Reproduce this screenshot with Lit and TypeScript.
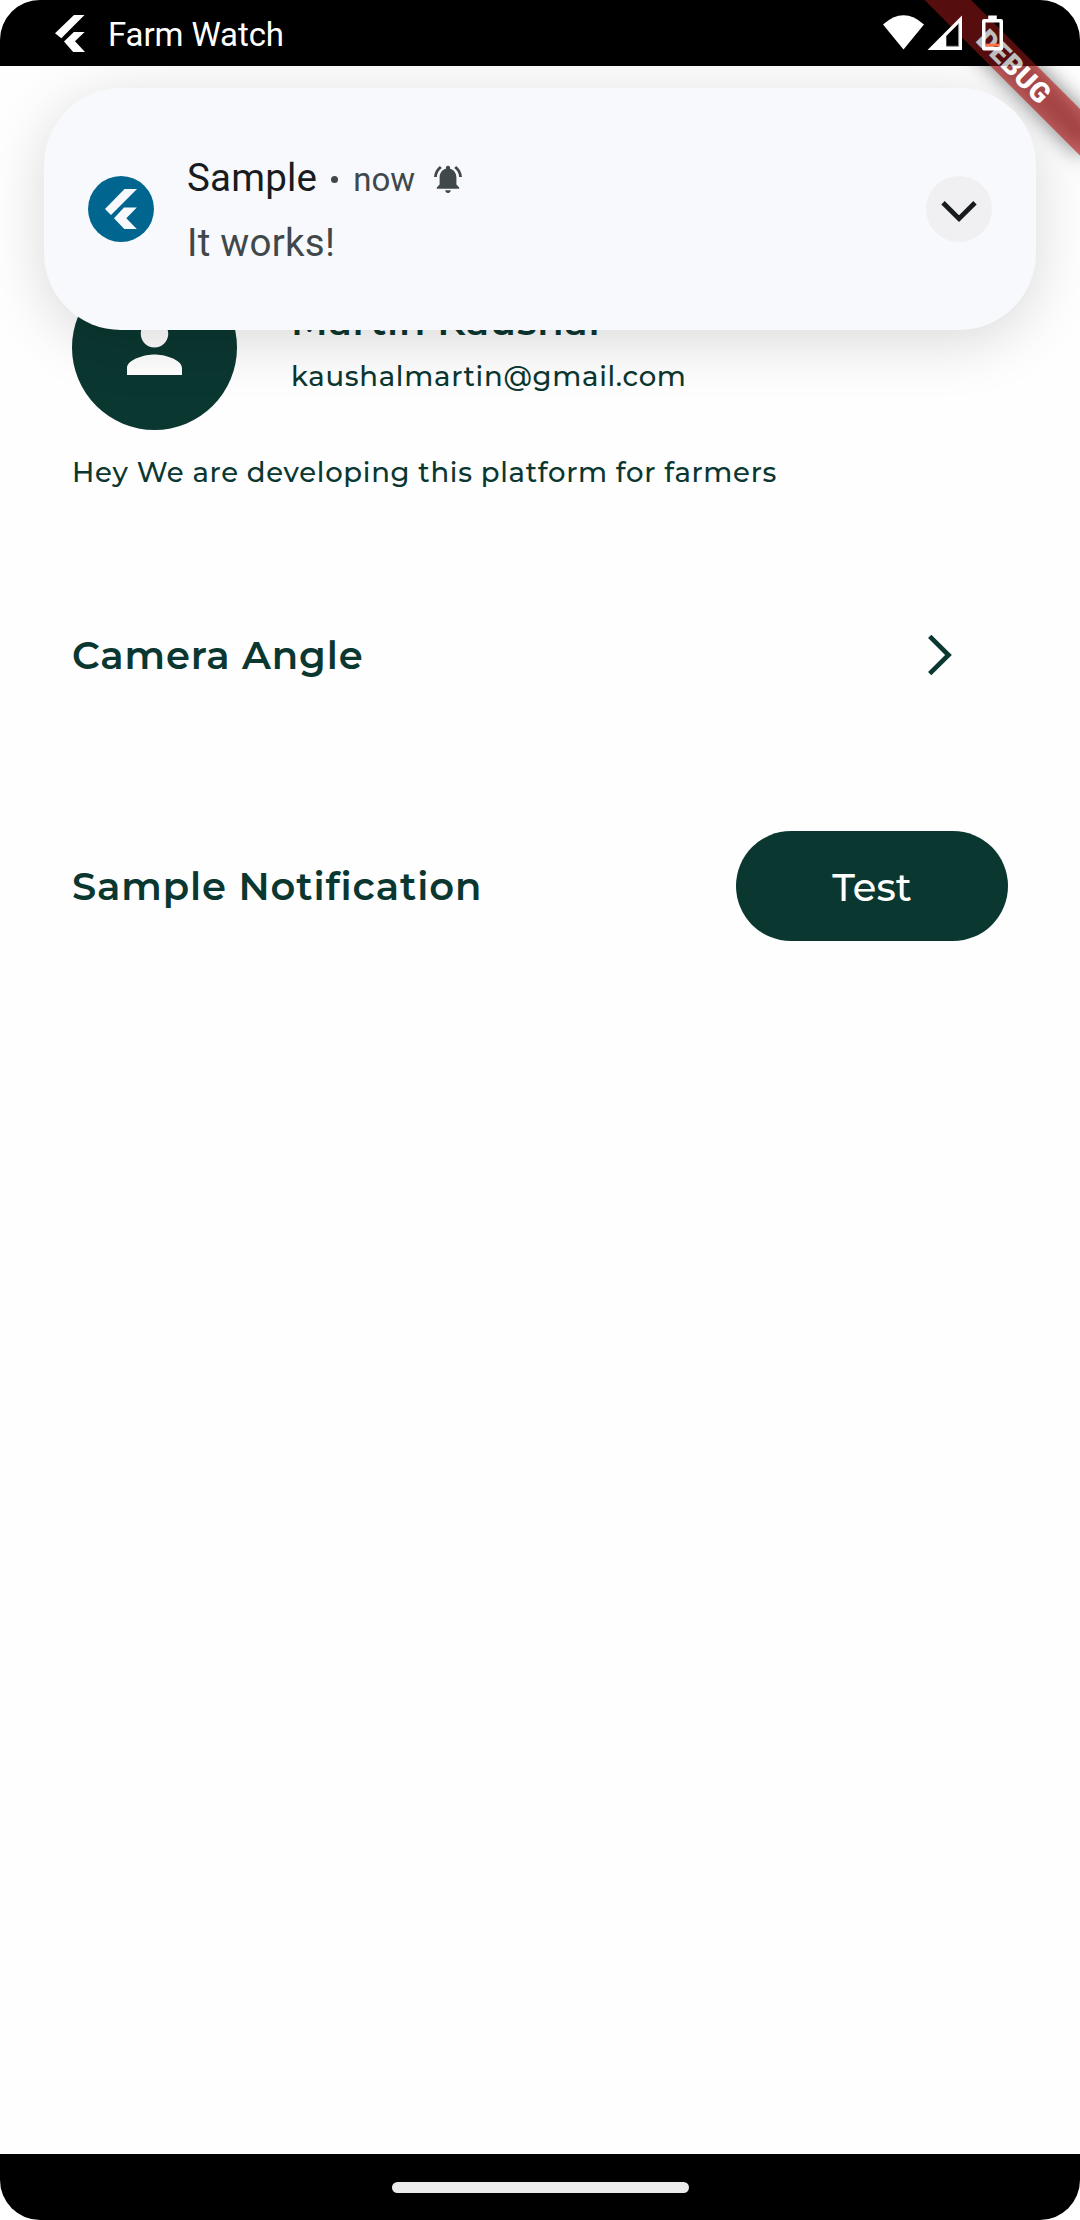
import { LitElement, html, css, svg } from "lit";
import { customElement } from "lit/decorators.js";

const flutterMark = svg`
  <path d="M19 0H29.5L6.3 23.3L0 18.3Z M18.8 17H29.6L20 26.3L30 37H18.2L9 26.5Z" fill="#fff"/>`;

@customElement("status-bar")
class StatusBar extends LitElement {
  static styles = css`
    :host { display: block; }
    .bar { box-sizing: border-box; height: 66px; display: flex; align-items: center; padding: 0 76px 0 55px; background: rgba(0, 0, 0, 0.25); color: #fff; }
    .logo { display: block; width: 30px; height: 37px; margin-top: 1px; }
    .title { margin-left: 23px; font: 400 33px/40px Roboto, sans-serif; letter-spacing: -0.1px; padding-top: 3px; flex: 1; white-space: nowrap; }
    .icons { display: block; width: 122px; height: 66px; }
  `;
  render() {
    return html`<div class="bar">
      <svg class="logo" viewBox="0 0 30 37">${flutterMark}</svg>
      <span class="title">Farm Watch</span>
      <svg class="icons" viewBox="882 0 122 66">
        <path d="M883 24.5Q903.5 6 924 24.5L903.500 49.500Z" fill="#fff"/>
        <path d="M927.500 50L962 15.500V50Z" fill="#fff"/>
        <path d="M946.300 36L958.700 23.500V46.300H946.300Z" fill="#000"/>
        <path d="M958.700 23.500V46.300H946.300" fill="none" stroke="#999" stroke-width="1"/>
        <path fill-rule="evenodd" fill="#fff" d="M988.200 15.500H996.800V19H1001Q1003 19 1003 21V48.500Q1003 50.500 1001 50.500H984Q982 50.500 982 48.500V21Q982 19 984 19H988.200ZM985.500 22.500V47H999.500V22.500Z"/>
        <rect x="985.500" y="43.700" width="14" height="2.800" fill="#ff7043"/>
      </svg>
    </div>`;
  }
}

@customElement("debug-banner")
class DebugBanner extends LitElement {
  static styles = css`
    :host { display: block; }
    .ribbon { display: block; width: 240px; height: 240px; }
    .label { font: 900 28px Roboto, sans-serif; letter-spacing: 0.4px; fill: #fff; }
  `;
  render() {
    return html`<svg class="ribbon" viewBox="-240 0 240 240">
      <defs><filter id="soft" x="-50%" y="-200%" width="200%" height="500%"><feGaussianBlur stdDeviation="10.500"/></filter></defs>
      <g transform="rotate(45)">
        <rect x="-110" y="77" width="220" height="33" fill="#000" fill-opacity=".5" filter="url(#soft)"/>
        <rect x="-112" y="77" width="224" height="33" fill="#b71c1c" fill-opacity=".627"/>
        <text class="label" x="0.500" y="103.500" text-anchor="middle">DEBUG</text>
      </g>
    </svg>`;
  }
}

@customElement("heads-up-card")
class HeadsUpCard extends LitElement {
  static styles = css`
    :host { display: block; }
    .card { box-sizing: border-box; width: 992px; height: 242px; border-radius: 77px; padding: 0 44px; display: flex; align-items: center; background: #f8f9fd; box-shadow: 0 11px 60px rgba(0, 0, 0, 0.15); font-family: Roboto, sans-serif; color: #40484c; }
    .badge { display: block; width: 66px; height: 66px; }
    .text { flex: 1; margin-left: 33px; padding-top: 2px; display: flex; flex-direction: column; gap: 20px; }
    .head { display: flex; align-items: center; height: 45px; }
    .title { font-size: 38.5px; line-height: 45px; letter-spacing: 0.2px; color: #191c1e; }
    .dot { width: 7px; height: 7px; border-radius: 50%; background: #40484c; margin: 3px 15px 0 14px; }
    .time { font-size: 33px; line-height: 39px; padding-top: 4px; }
    .bell { display: block; width: 28px; height: 28px; margin: 3px 0 0 19px; }
    .body { font-size: 38.5px; line-height: 45px; letter-spacing: 0.25px; }
    .expand { display: block; width: 66px; height: 66px; }
  `;
  render() {
    return html`<div class="card">
      <svg class="badge" viewBox="88 176 66 66">
        <circle cx="121" cy="209" r="33" fill="#00668f"/>
        <path d="M124.500 189H137L111 215L105 209Z M124 207.500H136.800L126.300 218.200L136.800 229H124.300L114 218.200Z" fill="#f8f9fd"/>
      </svg>
      <div class="text">
        <div class="head">
          <span class="title">Sample</span><span class="dot"></span><span class="time">now</span>
          <svg class="bell" viewBox="2 2 20 20" fill="#40484c">
            <path d="M7.580 4.080L6.150 2.650C3.750 4.480 2.170 7.300 2.030 10.500h2c.15-2.650 1.510-4.970 3.550-6.420zm12.390 6.420h2c-.15-3.200-1.730-6.020-4.120-7.850l-1.420 1.430c2.020 1.450 3.390 3.770 3.540 6.420zM18 11c0-3.070-1.640-5.640-4.500-6.320V4c0-.83-.67-1.500-1.500-1.500s-1.500.67-1.500 1.500v.68C7.630 5.360 6 7.920 6 11v5l-2 2v1h16v-1l-2-2v-5zm-6 11c.14 0 .27-.01.4-.04.65-.14 1.180-.58 1.440-1.180.1-.24.15-.5.15-.78h-4c.01 1.100.9 2 2.010 2z"/>
          </svg>
        </div>
        <span class="body">It works!</span>
      </div>
      <svg class="expand" viewBox="926 176 66 66">
        <circle cx="959" cy="209" r="33" fill="#f0f0f2"/>
        <path d="M943 202.800L959 218.700L975 202.800" fill="none" stroke="#191c1e" stroke-width="4.800"/>
      </svg>
    </div>`;
  }
}

@customElement("profile-page")
class ProfilePage extends LitElement {
  static styles = css`
    :host { display: block; color: #0b3731; font-family: Montserrat, Inter, sans-serif; }
    .page { padding: 199px 72px 0; }
    .profile { display: flex; height: 165px; }
    .avatar { display: block; width: 165px; height: 165px; }
    .info { margin: 34px 0 0 54px; }
    .name { font-size: 38.5px; font-weight: 600; line-height: 46px; letter-spacing: 0.72px; white-space: nowrap; }
    .label { font-size: 38.5px; font-weight: 600; line-height: 46px; letter-spacing: 0.88px; padding-top: 2px; white-space: nowrap; }
    .small { font-size: 27.5px; font-weight: 500; line-height: 34px; letter-spacing: 0.7px; white-space: nowrap; }
    .mail { margin-top: 14px; }
    .bio { margin-top: 25px; }
    .row { display: flex; align-items: center; justify-content: space-between; height: 110px; }
    .camera { margin-top: 111px; padding-right: 54px; }
    .sample { margin-top: 121px; }
    .chevron { display: block; width: 26px; height: 42px; }
    .button { box-sizing: border-box; width: 272px; height: 110px; padding-top: 3px; border-radius: 55px; display: flex; align-items: center; justify-content: center; background: #0b3731; color: #fff; font-size: 38.5px; font-weight: 500; line-height: 46px; }
  `;
  render() {
    return html`<div class="page">
      <div class="profile">
        <svg class="avatar" viewBox="0 0 48 48">
          <circle cx="24" cy="24" r="24" fill="#0b3731"/>
          <path transform="translate(12 12)" fill="#fff" d="M12 12c2.210 0 4-1.790 4-4s-1.790-4-4-4-4 1.790-4 4 1.790 4 4 4zm0 2c-2.670 0-8 1.340-8 4v2h16v-2c0-2.660-5.330-4-8-4z"/>
        </svg>
        <div class="info">
          <div class="name">Martin Kaushal</div>
          <div class="small mail">kaushalmartin@gmail.com</div>
        </div>
      </div>
      <div class="small bio">Hey We are developing this platform for farmers</div>
      <div class="row camera">
        <span class="label">Camera Angle</span>
        <svg class="chevron" viewBox="928 634.300 26 42"><path d="M929.700 636.700L948.500 655.300L929.700 673.900" fill="none" stroke="#0b3731" stroke-width="4.700"/></svg>
      </div>
      <div class="row sample">
        <span class="label">Sample Notification</span>
        <div class="button">Test</div>
      </div>
    </div>`;
  }
}

@customElement("app-root")
class AppRoot extends LitElement {
  static styles = css`
    :host { display: block; }
    .screen { position: relative; display: flex; flex-direction: column; width: 1080px; height: 2220px; border-radius: 40px; overflow: hidden; background: #fefefe; }
    .top { background: #000; }
    .status { display: block; position: relative; z-index: 3; }
    .content { flex: 1; }
    .banner { position: absolute; top: 0; right: 0; z-index: 1; }
    .notice { position: absolute; top: 88px; left: 44px; z-index: 2; }
    .nav { height: 66px; background: #000; display: flex; align-items: center; justify-content: center; }
    .handle { width: 297px; height: 11px; border-radius: 6px; background: #ebebeb; }
  `;
  render() {
    return html`<div class="screen">
      <div class="top"><status-bar class="status"></status-bar></div>
      <profile-page class="content"></profile-page>
      <div class="nav"><div class="handle"></div></div>
      <debug-banner class="banner"></debug-banner>
      <heads-up-card class="notice"></heads-up-card>
    </div>`;
  }
}
